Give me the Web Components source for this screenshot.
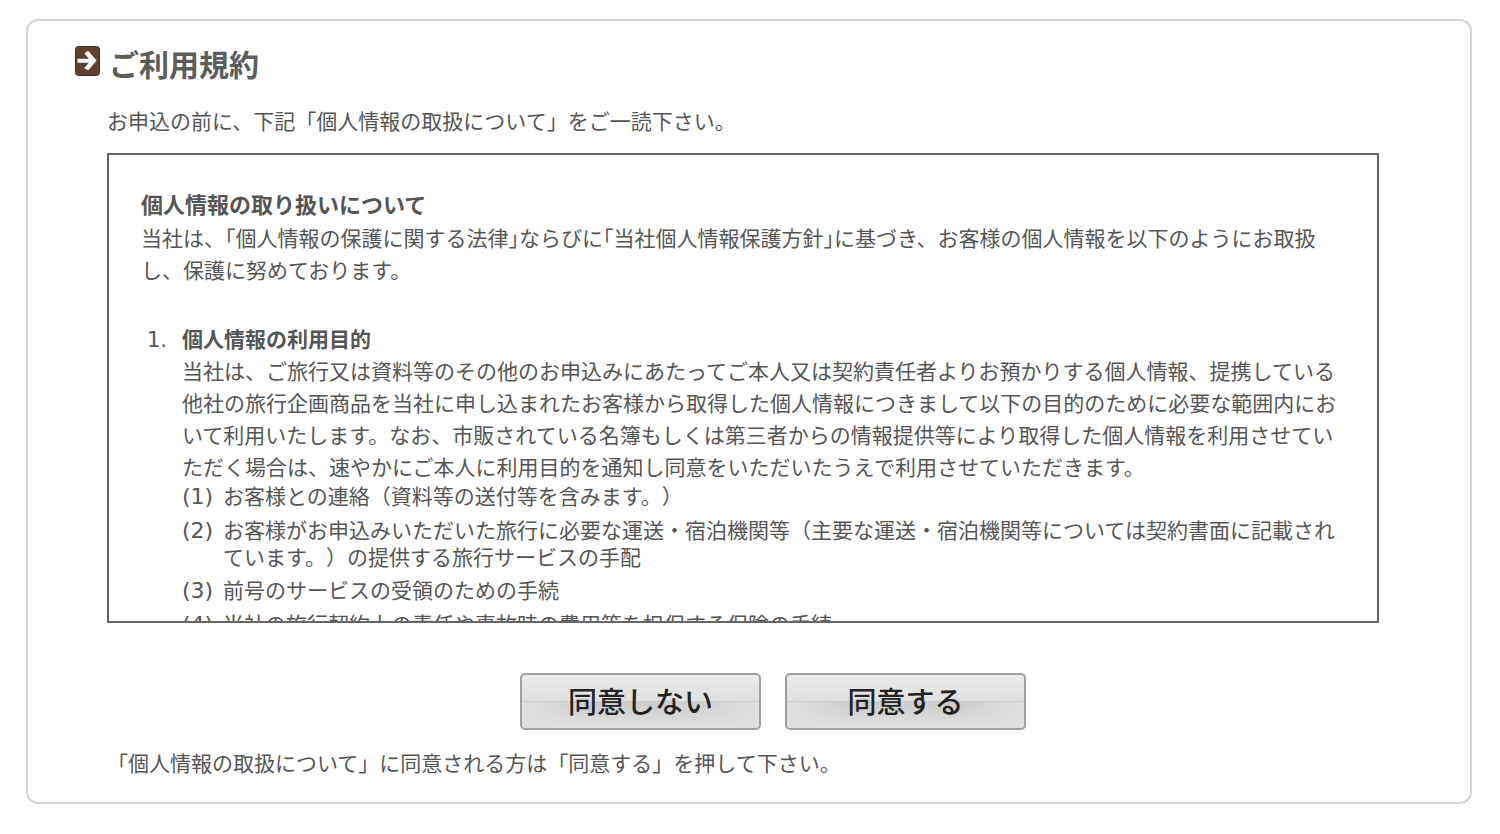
<!DOCTYPE html>
<html lang="ja">
<head>
<meta charset="utf-8">
<meta name="viewport" content="width=device-width, initial-scale=1">
<title>ご利用規約</title>
<style>
  body {
    margin: 0;
    padding: 19px 28px 31px 26px;
    background: #fff;
    color: #555;
    font: 21px/32px "Noto Sans CJK JP", sans-serif;
    text-spacing-trim: space-all;
  }
  p { margin: 0; }
</style>
</head>
<body>
<terms-card>
  <section-title slot="title">ご利用規約</section-title>
  <p slot="lead">お申込の前に、下記「個人情報の取扱について」をご一読下さい。</p>
  <terms-document></terms-document>
  <gloss-button slot="actions">同意しない</gloss-button>
  <gloss-button slot="actions">同意する</gloss-button>
  <p slot="note">「個人情報の取扱について」に同意される方は「同意する」を押して下さい。</p>
</terms-card>

<script>
const define = (name, html) => {
  const template = document.createElement('template');
  template.innerHTML = html;
  customElements.define(name, class extends HTMLElement {
    constructor() {
      super();
      this.attachShadow({ mode: 'open' }).append(template.content.cloneNode(true));
    }
  });
};

define('terms-card', `
  <style>
    :host {
      display: block;
      box-sizing: border-box;
      border: 2px solid #d4d4d4;
      border-radius: 12px;
      padding: 21px 91px 24px 47px;
    }
    .content { margin: 20px 0 0 32px; }
    .document { margin-top: 17px; }
    .actions {
      display: flex;
      flex-wrap: wrap;
      justify-content: center;
      gap: 24px;
      padding-left: 60px;
      margin: 50px 0 16px;
    }
  </style>
  <slot name="title"></slot>
  <div class="content">
    <slot name="lead"></slot>
    <div class="document"><slot></slot></div>
    <div class="actions"><slot name="actions"></slot></div>
    <slot name="note"></slot>
  </div>`);

define('section-title', `
  <style>
    :host { display: flex; align-items: flex-start; gap: 9px; }
    svg { flex: none; display: block; margin-top: 4px; }
    h1 { margin: 0; font-size: 30px; line-height: 42px; font-weight: 700; color: #5c5c5c; }
  </style>
  <svg width="25" height="30" viewBox="0 0 25 30" aria-hidden="true">
    <rect x=".5" y=".5" width="24" height="29" rx="3" fill="#60412f" stroke="#4b2c1c"/>
    <path d="M2.5 12.8H14L9.3 7.2 12.2 5.2H13.6L21.6 14.6 13.6 24H12.2L9.3 22 14 16.8H2.5Z" fill="#fff"/>
  </svg>
  <h1><slot></slot></h1>`);

define('gloss-button', `
  <style>
    :host { display: block; }
    button {
      display: block;
      box-sizing: border-box;
      width: 241px;
      height: 57px;
      margin: 0;
      padding: 0 0 4px;
      border: 2px solid #a0a0a0;
      border-radius: 5px;
      background:
        linear-gradient(90deg, #e0e0e0, #e0e0e000 28%, #e0e0e000 72%, #e0e0e0) 0 100% / 100% 50% no-repeat,
        linear-gradient(#ebebeb, #dfdfdf 49%, #cdcdcd 50%, #d1d1d1 65%, #e2e2e2);
      background-origin: padding-box;
      color: #222;
      font: 500 29px/42px "Noto Sans CJK JP", sans-serif;
    }
  </style>
  <button type="button"><slot></slot></button>`);

define('terms-document', `
  <style>
    :host {
      display: block;
      box-sizing: border-box;
      height: 470px;
      overflow-y: auto;
      scrollbar-width: none;
      border: 2px solid #666;
      padding: 32px 36px 0 32px;
    }
    h2, h3, p, ol { margin: 0; padding: 0; }
    ol { list-style: none; }
    h2 { font-size: 22px; line-height: 32px; margin-bottom: 2px; }
    h3 { font-size: 21px; line-height: 32px; }
    .clauses { margin-top: 37px; }
    .clauses > li {
      display: grid;
      grid-template-columns: 35px 1fr;
      align-items: baseline;
      padding-left: 6px;
    }
    .items > li {
      display: grid;
      grid-template-columns: 41px 1fr;
      align-items: baseline;
      line-height: 27px;
      margin-bottom: 6px;
    }
    .number { font-family: "DejaVu Sans", sans-serif; }
    .items .number { font-size: 22px; }
  </style>
  <h2>個人情報の取り扱いについて</h2>
  <p>当社は、｢個人情報の保護に関する法律｣ならびに｢当社個人情報保護方針｣に基づき、お客様の個人情報を以下のようにお取扱し、保護に努めております。</p>
  <ol class="clauses">
    <li>
      <span class="number">1.</span>
      <div>
        <h3>個人情報の利用目的</h3>
        <p>当社は、ご旅行又は資料等のその他のお申込みにあたってご本人又は契約責任者よりお預かりする個人情報、提携している他社の旅行企画商品を当社に申し込まれたお客様から取得した個人情報につきまして以下の目的のために必要な範囲内において利用いたします。なお、市販されている名簿もしくは第三者からの情報提供等により取得した個人情報を利用させていただく場合は、速やかにご本人に利用目的を通知し同意をいただいたうえで利用させていただきます。</p>
        <ol class="items">
          <li><span class="number">(1)</span><span>お客様との連絡（資料等の送付等を含みます。）</span></li>
          <li><span class="number">(2)</span><span>お客様がお申込みいただいた旅行に必要な運送・宿泊機関等（主要な運送・宿泊機関等については契約書面に記載されています。）の提供する旅行サービスの手配</span></li>
          <li><span class="number">(3)</span><span>前号のサービスの受領のための手続</span></li>
          <li><span class="number">(4)</span><span>当社の旅行契約上の責任や事故時の費用等を担保する保険の手続</span></li>
        </ol>
      </div>
    </li>
  </ol>`);
</script>
</body>
</html>
